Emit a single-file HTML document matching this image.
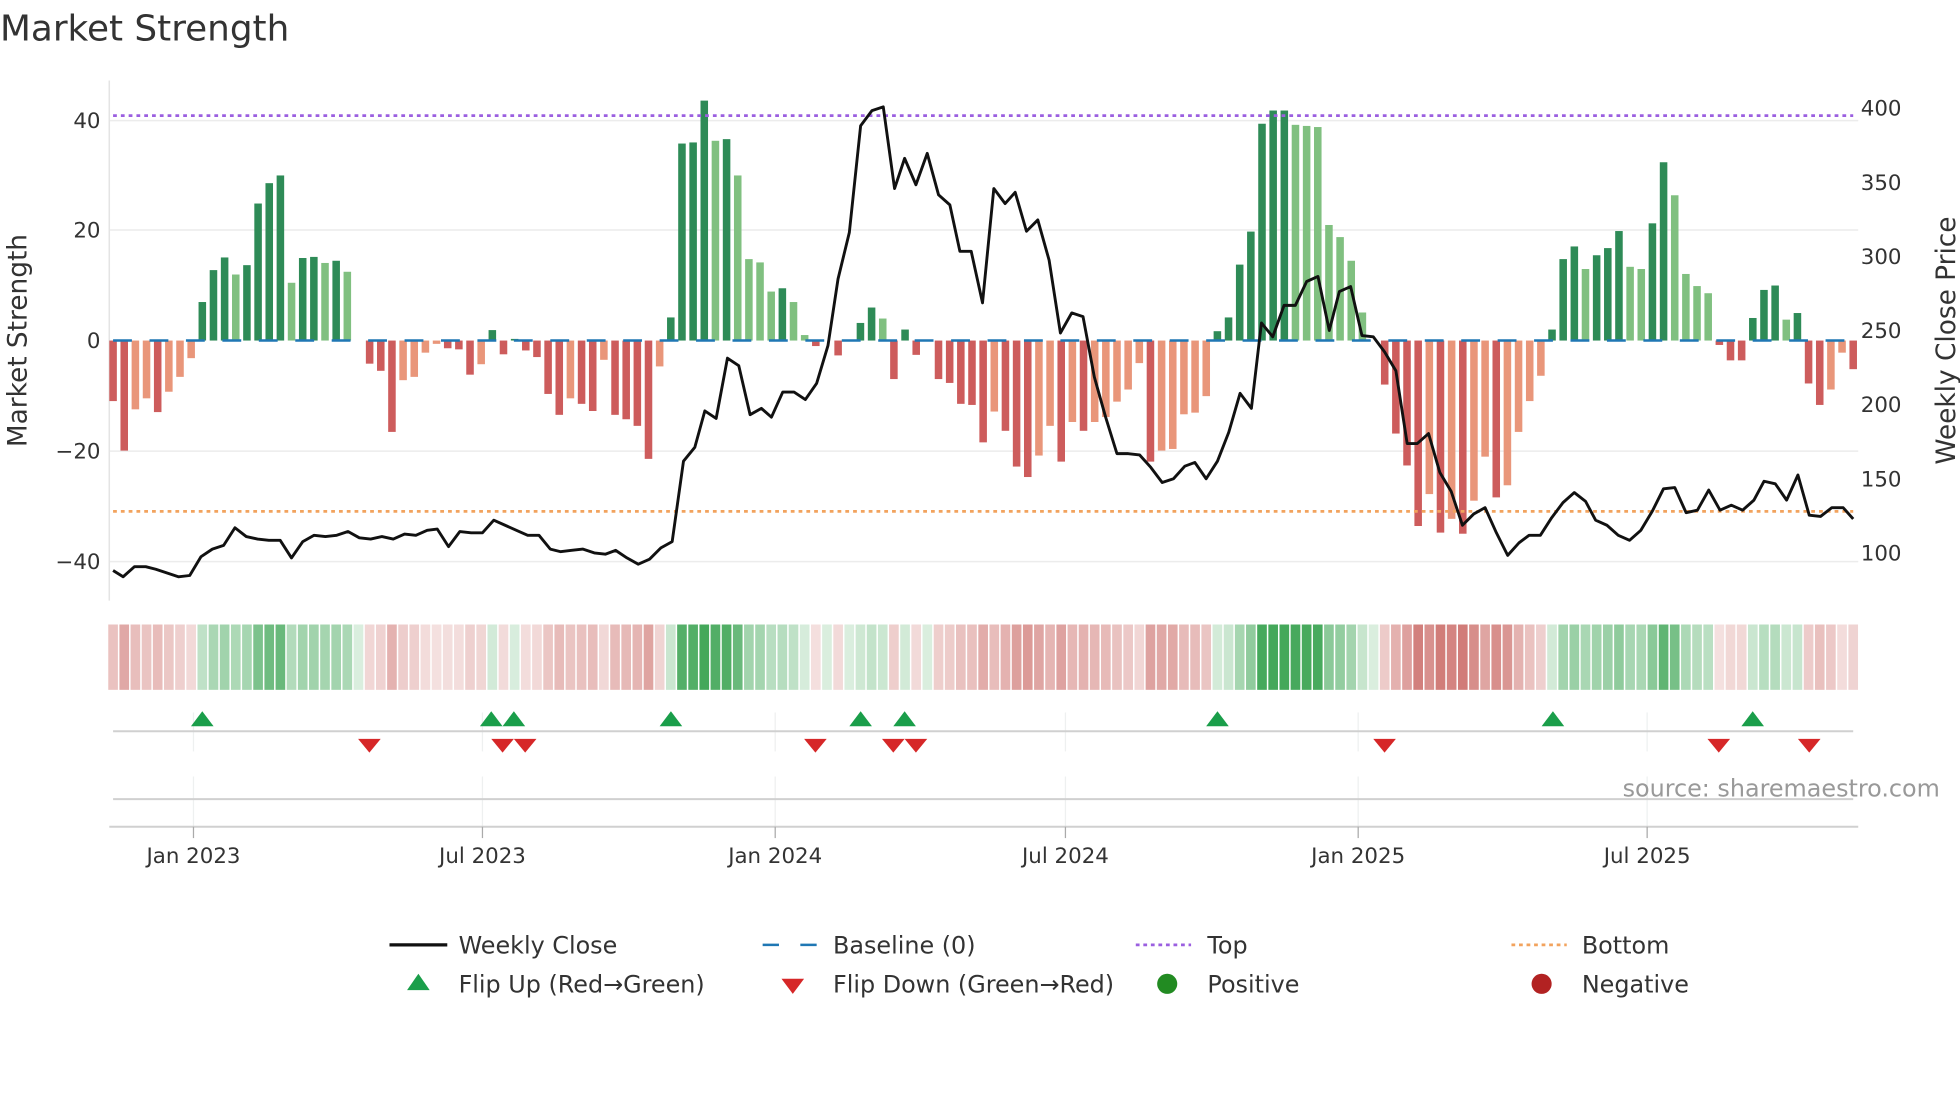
<!DOCTYPE html>
<html><head><meta charset="utf-8"><style>
html,body{margin:0;padding:0;background:#fff;width:1960px;height:1102px;overflow:hidden}
svg text{font-family:"DejaVu Sans","Liberation Sans",sans-serif;fill:#333}
</style></head><body>
<svg id="s" width="1960" height="1102" viewBox="0 0 1560 877" xmlns="http://www.w3.org/2000/svg">
<text x="0" y="32" font-size="28.5">Market Strength</text>
<g stroke="#ececec" stroke-width="1.2">
<line x1="87" y1="96" x2="1479" y2="96"/><line x1="87" y1="183" x2="1479" y2="183"/>
<line x1="87" y1="359" x2="1479" y2="359"/><line x1="87" y1="447" x2="1479" y2="447"/>
</g>
<line x1="87" y1="64" x2="87" y2="478" stroke="#e4e4e4" stroke-width="1.2"/>
<g id="bars"></g>
<line x1="90" y1="271" x2="1475" y2="271" stroke="#1f77b4" stroke-width="2" stroke-dasharray="15 14"/>
<line x1="90" y1="92" x2="1475" y2="92" stroke="#9b5fe0" stroke-width="2.2" stroke-dasharray="3 3.2"/>
<line x1="90" y1="407" x2="1475" y2="407" stroke="#f2a35e" stroke-width="2.2" stroke-dasharray="3 3.2"/>
<polyline id="price" fill="none" stroke="#111" stroke-width="2.3" stroke-linejoin="round"/>
<g font-size="17" text-anchor="end">
<text x="80" y="102">40</text><text x="80" y="189">20</text><text x="80" y="277">0</text>
<text x="80" y="365">−20</text><text x="80" y="453">−40</text></g>
<g font-size="17">
<text x="1481" y="92">400</text><text x="1481" y="151">350</text><text x="1481" y="210">300</text>
<text x="1481" y="269">250</text><text x="1481" y="328">200</text><text x="1481" y="387">150</text><text x="1481" y="446">100</text></g>
<text font-size="21" text-anchor="middle" transform="translate(21,271) rotate(-90)">Market Strength</text>
<text font-size="21" text-anchor="middle" transform="translate(1556,271) rotate(-90)">Weekly Close Price</text>
<g id="strip"></g>
<g stroke="#eef0f0" stroke-width="1">
<line x1="154" y1="567" x2="154" y2="598"/><line x1="384" y1="567" x2="384" y2="598"/><line x1="617" y1="567" x2="617" y2="598"/><line x1="848" y1="567" x2="848" y2="598"/><line x1="1081" y1="567" x2="1081" y2="598"/><line x1="1311" y1="567" x2="1311" y2="598"/>
<line x1="154" y1="618" x2="154" y2="658"/><line x1="384" y1="618" x2="384" y2="658"/><line x1="617" y1="618" x2="617" y2="658"/><line x1="848" y1="618" x2="848" y2="658"/><line x1="1081" y1="618" x2="1081" y2="658"/><line x1="1311" y1="618" x2="1311" y2="658"/>
</g>
<line x1="90" y1="582" x2="1475" y2="582" stroke="#d0d0d0" stroke-width="1.6"/>
<line x1="90" y1="636" x2="1475" y2="636" stroke="#d0d0d0" stroke-width="1.6"/>
<line x1="87" y1="658" x2="1479" y2="658" stroke="#d0d0d0" stroke-width="1.6"/>
<g stroke="#aaa" stroke-width="1"><line x1="154" y1="658" x2="154" y2="667"/><line x1="384" y1="658" x2="384" y2="667"/><line x1="617" y1="658" x2="617" y2="667"/><line x1="848" y1="658" x2="848" y2="667"/><line x1="1081" y1="658" x2="1081" y2="667"/><line x1="1311" y1="658" x2="1311" y2="667"/></g>
<g id="sig"></g>
<text x="1544" y="634" font-size="19" text-anchor="end" style="fill:#999">source: sharemaestro.com</text>
<g font-size="17" text-anchor="middle">
<text x="154" y="687">Jan 2023</text><text x="384" y="687">Jul 2023</text><text x="617" y="687">Jan 2024</text>
<text x="848" y="687">Jul 2024</text><text x="1081" y="687">Jan 2025</text><text x="1311" y="687">Jul 2025</text></g>
<g font-size="19">
<line x1="310" y1="752" x2="356" y2="752" stroke="#111" stroke-width="2.6"/><text x="365" y="759">Weekly Close</text>
<line x1="607" y1="752" x2="651" y2="752" stroke="#1f77b4" stroke-width="2" stroke-dasharray="13 17"/><text x="663" y="759">Baseline (0)</text>
<line x1="904" y1="752" x2="948" y2="752" stroke="#9b5fe0" stroke-width="2.2" stroke-dasharray="3 3"/><text x="961" y="759">Top</text>
<line x1="1203" y1="752" x2="1247" y2="752" stroke="#f2a35e" stroke-width="2.2" stroke-dasharray="3 3"/><text x="1259" y="759">Bottom</text>
<polygon points="324,788 342,788 333,775" fill="#1a9e4a"/><text x="365" y="790">Flip Up (Red→Green)</text>
<polygon points="622,779 640,779 631,791" fill="#d62728"/><text x="663" y="790">Flip Down (Green→Red)</text>
<circle cx="929" cy="783" r="8" fill="#228b22"/><text x="961" y="790">Positive</text>
<circle cx="1227" cy="783" r="8" fill="#b22222"/><text x="1259" y="790">Negative</text>
</g>
</svg>
<script>
var V=[[-11,1],[-20,1],[-12.5,0],[-10.5,0],[-13,1],[-9.3,0],[-6.6,0],[-3.2,0],[7,1],[12.8,1],[15.1,1],[12,0],[13.7,1],[24.9,1],[28.6,1],[30,1],[10.5,0],[15,1],[15.2,1],[14.1,0],[14.5,1],[12.5,0],[0,0],
[-4.2,1],[-5.5,1],[-16.6,1],[-7.2,0],[-6.6,0],[-2.2,0],[-0.6,0],[-1.4,1],[-1.6,1],[-6.2,1],[-4.3,0],[1.9,1],[-2.5,1],[0.3,1],[-1.8,1],[-3,1],[-9.7,1],[-13.5,1],[-10.5,0],[-11.5,1],[-12.8,1],[-3.5,0],[-13.5,1],[-14.3,1],[-15.5,1],[-21.5,1],[-4.7,0],[4.2,1],[35.8,1],[36,1],[43.6,1],[36.3,0],[36.6,1],[30,0],[14.8,0],[14.2,0],[8.9,0],[9.5,1],[7,0],[1,0],[-1,1],[0,0],[-2.7,1],[0,0],[3.2,1],[6,1],[4,0],[-7,1],[2,1],[-2.6,1],[0,0],[-7,1],[-7.7,1],[-11.5,1],[-11.7,1],[-18.5,1],
[-12.9,0],[-16.4,1],[-22.9,1],[-24.8,1],[-20.9,0],[-15.5,0],[-22,1],[-14.8,0],[-16.4,1],[-14.8,0],[-13.9,0],[-11.1,0],[-8.9,0],[-4.1,0],[-22,1],[-20,0],[-19.7,0],[-13.4,0],[-13.1,0],[-10.1,0],[1.7,1],[4.2,1],[13.8,1],[19.8,1],[39.4,1],[41.8,1],[41.8,1],[39.2,0],[39,0],[38.8,0],[21,0],[18.8,0],[14.5,0],[5.1,0],[0,0],[-8,1],[-16.9,1],[-22.7,1],[-33.7,1],[-27.9,0],[-34.9,1],[-32.4,0],[-35.1,1],[-29.1,0],[-21.1,0],[-28.5,1],[-26.3,0],[-16.6,0],[-11,0],[-6.4,0],[2,1],[14.8,1],[17.1,1],[13,0],[15.5,1],[16.8,1],[19.9,1],[13.4,0],[13,0],[21.3,1],[32.4,1],[26.4,0],[12.1,0],[9.9,0],[8.6,0],[-0.8,1],[-3.6,1],[-3.6,1],[4.1,1],[9.2,1],[10,1],[3.8,0],[5,1],[-7.8,1],[-11.7,1],[-8.9,0],[-2.2,0],[-5.2,1]];
var NS="http://www.w3.org/2000/svg";
function el(n,a,p){var e=document.createElementNS(NS,n);for(var k in a)e.setAttribute(k,a[k]);p.appendChild(e);return e;}
var B=document.getElementById("bars"),S=document.getElementById("strip");
var step=(1475-90)/(V.length-1);
function mix(c,a){return "rgb("+c.map(function(x){return Math.round(255+(x-255)*a)}).join(",")+")";}
for(var i=0;i<V.length;i++){
 var v=V[i][0],d=V[i][1],x=90+i*step,h=Math.abs(v)*4.38;
 var col=v>=0?(d?"#2e8b57":"#80c080"):(d?"#cd5c5c":"#e9967a");
 if(h>0.5) el("rect",{x:x-3,y:v>=0?271-h:271,width:6,height:h,fill:col},B);
 var a=0.2+0.8*Math.min(1,Math.abs(v)/40);
 el("rect",{x:x-step/2+0.6,y:497,width:step-1.2,height:52,fill:mix(v>=0?[68,168,90]:[204,110,106],a)},S);
}
var P=[[90,454],[98,459],[107,451],[116,451],[124,453],[133,456],[142,459],[151,458],[160,443],[169,437],[178,434],[187,420],[196,427],[205,429],[214,430],[223,430],[232,444],[241,431],[250,426],[259,427],[268,426],[277,423],[286,428],[295,429],[304,427],[313,429],[322,425],[331,426],[340,422],[348,421],[357,435],[366,423],[375,424],[384,424],[393,414],[402,418],[411,422],[420,426],[429,426],[438,437],[446,439],[455,438],[464,437],[473,440],[482,441],[490,438],[499,444],[508,449],[517,445],[526,436],[535,431],[544,367],[553,356],[561,327],[570,333],[579,285],[588,291],[597,330],[606,325],[614,332],[623,312],[632,312],[641,318],[650,305],[659,275],[667,222],[676,185],[685,100],[694,88],[703,85],[712,150],[720,126],[729,147],[738,122],[747,155],[756,163],[764,200],[773,200],[782,241],[791,150],[800,162],[808,153],[817,184],[826,175],[835,207],[844,265],[853,249],[862,252],[871,300],[880,332],[889,361],[898,361],[907,362],[916,372],[925,384],[934,381],[943,371],[951,368],[960,381],[969,367],[978,344],[987,313],[996,325],[1004,257],[1013,268],[1022,243],[1031,243],[1040,224],[1049,220],[1058,263],[1066,232],[1075,228],[1084,267],[1093,268],[1102,280],[1111,295],[1120,353],[1128,353],[1137,345],[1146,376],[1155,391],[1164,418],[1173,409],[1182,404],[1191,424],[1200,442],[1209,432],[1217,426],[1226,426],[1235,412],[1244,400],[1253,392],[1262,399],[1270,414],[1279,418],[1288,426],[1297,430],[1306,422],[1315,407],[1324,389],[1333,388],[1342,408],[1351,406],[1360,390],[1369,406],[1378,402],[1387,406],[1396,398],[1404,383],[1413,385],[1422,398],[1431,378],[1440,410],[1449,411],[1458,404],[1467,404],[1475,413]];
document.getElementById("price").setAttribute("points",P.map(function(p){return p.join(",")}).join(" "));
var G=document.getElementById("sig");
[161,391,409,534,685,720,969,1236,1395].forEach(function(x){el("polygon",{points:(x-9)+",578 "+(x+9)+",578 "+x+",566",fill:"#1a9e4a"},G);});
[294,400,418,649,711,729,1102,1368,1440].forEach(function(x){el("polygon",{points:(x-9)+",588 "+(x+9)+",588 "+x+",599",fill:"#d62728"},G);});
</script>
</body></html>
